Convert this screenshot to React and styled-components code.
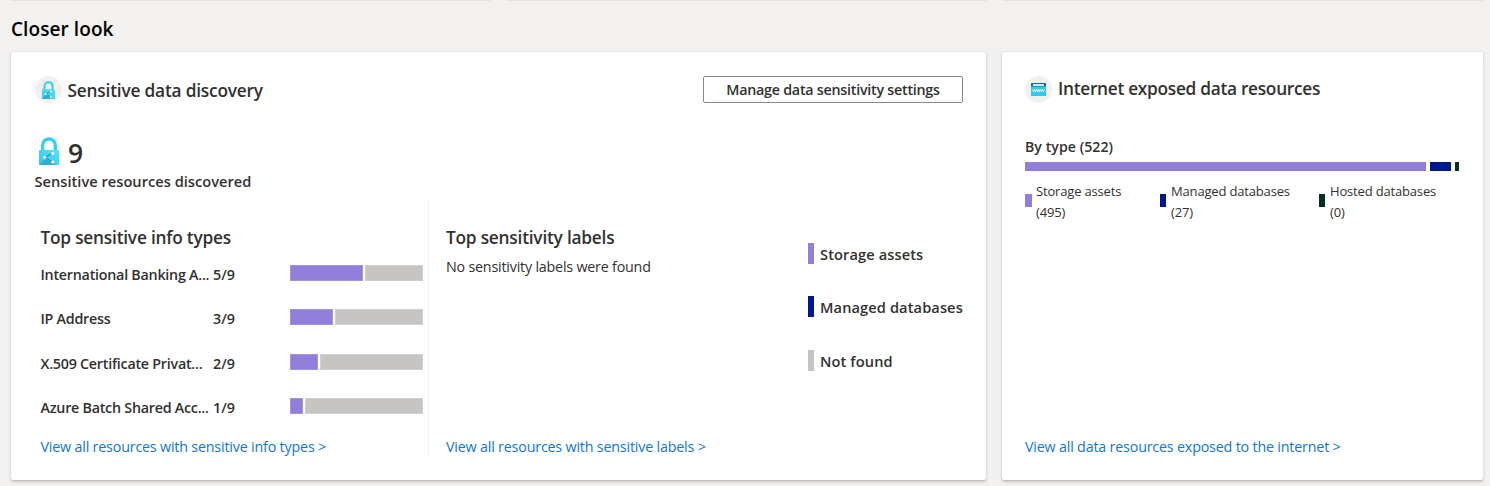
import React from "react";
import styled, { createGlobalStyle } from "styled-components";

const color = {
  purple: "#917edb",
  navy: "#00188f",
  green: "#022f22",
  gray: "#c6c5c3",
  ink: "#323130",
  link: "#0f78d0",
};

const GlobalStyle = createGlobalStyle`
  * { box-sizing: border-box; }
  body {
    margin: 0;
    background: #f2f1ef;
    color: ${color.ink};
    font-family: "Segoe UI", "Open Sans", "Noto Sans", sans-serif;
    overflow: hidden;
  }
`;

const Page = styled.main`
  width: 1490px;
  height: 486px;
  display: flex;
  flex-direction: column;
`;

const UpperEdges = styled.div`
  height: 1px;
  display: grid;
  grid-template-columns: 480px 480px 481px;
  column-gap: 16px;
  padding-left: 11px;
  & > span { background: #e5e4e2; }
`;

const Text = styled.span`
  font-size: ${(p) => p.$size || 14.3}px;
  font-weight: ${(p) => p.$weight || 600};
  letter-spacing: ${(p) => p.$track || 0}px;
  line-height: ${(p) => p.$line || 20}px;
  white-space: nowrap;
`;

const PageTitle = styled.h1`
  margin: 0;
  padding: 14px 0 0 11px;
  height: 51px;
  font-size: 19px;
  font-weight: 600;
  letter-spacing: 0.08px;
  line-height: 28px;
  color: #000;
`;

const Cards = styled.div`
  display: grid;
  grid-template-columns: 975px 481px;
  column-gap: 16px;
  padding-left: 11px;
  height: 428px;
`;

const Card = styled.section`
  background: #fff;
  border-radius: 2px;
  box-shadow: 0 1.6px 3.6px rgba(0, 0, 0, 0.15), 0 0.3px 1.2px rgba(0, 0, 0, 0.12);
  display: flex;
  flex-direction: column;
  padding-top: 24px;
`;

const Header = styled.header`
  display: flex;
  align-items: center;
  height: 27px;
  padding: 0 23px 0 ${(p) => (p.$tight ? 23 : 24)}px;
`;

const HeaderTitle = styled(Text)`
  height: 20px;
  line-height: ${(p) => (p.$tight ? 18 : 22)}px;
`;

const Badge = styled.span`
  width: 27px;
  height: 27px;
  border-radius: 50%;
  background: #f2f1ef;
  display: flex;
  align-items: center;
  justify-content: center;
  margin-right: ${(p) => p.$gap || 5.5}px;
`;

const Button = styled.button`
  margin: 0 0 0 auto;
  width: 260px;
  height: 27px;
  padding: 0;
  border: 1px solid #8a8886;
  border-radius: 2px;
  background: #fff;
  color: ${color.ink};
  font-family: inherit;
  line-height: 1;
`;

const Stat = styled.div`
  display: flex;
  align-items: center;
  height: 30px;
  margin-top: 33px;
  padding-left: 28px;
  gap: 9px;
`;

const StatValue = styled(Text)`
  padding-top: 3px;
`;

const StatCaption = styled.div`
  padding: 5px 0 0 23.5px;
  height: 32px;
  display: flex;
`;

const Lower = styled.div`
  display: grid;
  grid-template-columns: 418px 379px 1fr;
  grid-template-rows: 259px;
`;

const Column = styled.div`
  display: flex;
  flex-direction: column;
  padding: 28px 5px 0 ${(p) => p.$left}px;
  ${(p) => p.$divided && "border-right: 1px solid #f5f4f3;"}
`;

const Link = styled.a`
  margin-top: auto;
  height: 20px;
  color: ${color.link};
  display: flex;
`;

const InfoRows = styled.div`
  display: grid;
  grid-auto-rows: 44.33px;
  height: 172px;
  margin-top: 14px;
`;

const InfoRow = styled.div`
  display: grid;
  grid-template-columns: 172.5px 77px 133px;
  align-items: start;
`;

const InfoBar = styled.div`
  display: flex;
  gap: 2px;
  height: 16px;
  margin-top: 1px;
`;

const InfoSegment = styled.span`
  flex: ${(p) => (p.$width ? `0 0 ${p.$width}px` : "1")};
  background: ${(p) => p.$color};
  border: 1px solid rgba(255, 255, 255, 0.18);
`;

const Legend = styled.div`
  display: grid;
  grid-auto-rows: 53.4px;
  padding-top: 45px;
`;

const LegendItem = styled.div`
  display: flex;
  align-items: flex-start;
  gap: 6px;
`;

const LegendSwatch = styled.span`
  width: 6px;
  height: 21px;
  background: ${(p) => p.$color};
`;

const Exposure = styled.div`
  display: flex;
  flex-direction: column;
  padding: 34px 24px 23px 23px;
  flex: 1;
`;

const ExposureBar = styled.div`
  display: flex;
  gap: 4px;
  height: 9px;
  margin-top: 5px;
`;

const Segment = styled.span`
  width: ${(p) => p.$width}px;
  background: ${(p) => p.$color};
`;

const TypeLegend = styled.div`
  display: grid;
  grid-template-columns: 135px 159px 1fr;
  margin-top: 10px;
`;

const TypeItem = styled.div`
  display: flex;
  align-items: flex-start;
  height: 42px;
  gap: ${(p) => p.$gap}px;
`;

const TypeSwatch = styled.span`
  width: ${(p) => p.$width}px;
  height: 13px;
  margin-top: 13px;
  background: ${(p) => p.$color};
`;

const TypeText = styled.div`
  display: flex;
  flex-direction: column;
`;

function LockIcon({ width, height, id }) {
  return (
    <svg width={width} height={height} viewBox="0 0 20 28">
      <defs>
        <linearGradient id={id} x1="0" y1="1" x2="1" y2="0">
          <stop offset="0" stopColor="#3cc4e6" />
          <stop offset="0.5" stopColor="#42d4f4" />
          <stop offset="1" stopColor="#50e6ff" />
        </linearGradient>
      </defs>
      <path d="M3.7 14V8.6C3.700 4.500 6.300 2 10 2s6.300 2.500 6.300 6.600V14" fill="none" stroke="#32d0f5" strokeWidth="3.300" />
      <rect x="0" y="13" width="20" height="15" rx="0.600" fill={`url(#${id})`} />
      <path d="M0 28 6 22 13.800 25.500 17 28Z" fill="#198ab3" opacity="0.450" />
      <path d="M13.700 16.400 5.600 20.300 13.700 25" fill="none" stroke="#1d7fa5" strokeWidth="1" />
      <circle cx="5.600" cy="20.300" r="1.600" fill="#fff" />
      <circle cx="13.800" cy="16.400" r="1.600" fill="#fff" />
      <circle cx="13.800" cy="25" r="1.600" fill="#fff" />
    </svg>
  );
}

function WebIcon() {
  return (
    <svg width="15" height="13" viewBox="0 0 15 13">
      <rect width="15" height="13" rx="0.500" fill="#32c8f1" />
      <path d="M0 0.500Q0 0 .5 0h14q.5 0 .5.5V3.600H0Z" fill="#1267b4" />
      <rect x="2" y="1" width="11" height="2" fill="#d9e8f5" />
      <path
        d="M1.600 6.300l1 2.600 1-2.600 1 2.600 1-2.600M5.700 6.300l.9 2.600.9-2.600.9 2.600.9-2.600M9.400 6.300l1 2.600 1-2.600 1 2.600 1-2.600"
        fill="none"
        stroke="#e9fbff"
        strokeWidth="0.800"
      />
    </svg>
  );
}

const infoTypes = [
  { name: "International Banking A...", count: "5/9", width: 73 },
  { name: "IP Address", count: "3/9", width: 43 },
  { name: "X.509 Certificate Privat...", count: "2/9", width: 28 },
  { name: "Azure Batch Shared Acc...", count: "1/9", width: 13 },
];

const legend = [
  { name: "Storage assets", color: color.purple },
  { name: "Managed databases", color: color.navy },
  { name: "Not found", color: color.gray },
];

const types = [
  { name: "Storage assets", count: "(495)", color: color.purple, swatch: 7, gap: 4, width: 401 },
  { name: "Managed databases", count: "(27)", color: color.navy, swatch: 6, gap: 5, width: 21 },
  { name: "Hosted databases", count: "(0)", color: color.green, swatch: 6, gap: 5, width: 4 },
];

export default function App() {
  return (
    <Page>
      <GlobalStyle />
      <UpperEdges><span /><span /><span /></UpperEdges>
      <PageTitle>Closer look</PageTitle>
      <Cards>
        <Card>
          <Header>
            <Badge><LockIcon width={13} height={18} id="lockSmall" /></Badge>
            <HeaderTitle $size={17.3} $track={-0.2}>Sensitive data discovery</HeaderTitle>
            <Button><Text $track={-0.25}>Manage data sensitivity settings</Text></Button>
          </Header>
          <Stat>
            <LockIcon width={20} height={28} id="lockLarge" />
            <StatValue $size={26.5} $line={36}>9</StatValue>
          </Stat>
          <StatCaption><Text $size={14.6} $track={0.03}>Sensitive resources discovered</Text></StatCaption>
          <Lower>
            <Column $left={29.5} $divided>
              <Text $size={17.3} $line={24} $track={-0.22}>Top sensitive info types</Text>
              <InfoRows>
                {infoTypes.map((t) => (
                  <InfoRow key={t.name}>
                    <Text $track={-0.25} $line={22}>{t.name}</Text>
                    <Text $track={0} $line={22}>{t.count}</Text>
                    <InfoBar>
                      <InfoSegment $width={t.width} $color={color.purple} />
                      <InfoSegment $color={color.gray} />
                    </InfoBar>
                  </InfoRow>
                ))}
              </InfoRows>
              <Link><Text $weight={400} $track={-0.19}>View all resources with sensitive info types &gt;</Text></Link>
            </Column>
            <Column $left={17}>
              <Text $size={17.3} $line={24} $track={-0.22}>Top sensitivity labels</Text>
              <Text $weight={400} $track={-0.21} $line={33}>No sensitivity labels were found</Text>
              <Link><Text $weight={400} $track={-0.19}>View all resources with sensitive labels &gt;</Text></Link>
            </Column>
            <Legend>
              {legend.map((l) => (
                <LegendItem key={l.name}>
                  <LegendSwatch $color={l.color} />
                  <Text $line={22} $size={14.6} $track={0.11}>{l.name}</Text>
                </LegendItem>
              ))}
            </Legend>
          </Lower>
        </Card>
        <Card>
          <Header $tight>
            <Badge $gap={6}><WebIcon /></Badge>
            <HeaderTitle $tight $size={17.3} $track={-0.29}>Internet exposed data resources</HeaderTitle>
          </Header>
          <Exposure>
            <Text $size={14.1} $track={0.06}>By type (522)</Text>
            <ExposureBar>
              {types.map((t) => <Segment key={t.name} $width={t.width} $color={t.color} />)}
            </ExposureBar>
            <TypeLegend>
              {types.map((t) => (
                <TypeItem key={t.name} $gap={t.gap}>
                  <TypeSwatch $width={t.swatch} $color={t.color} />
                  <TypeText>
                    <Text $size={13} $weight={400} $line={21} $track={-0.17}>{t.name}</Text>
                    <Text $size={13} $weight={400} $line={21} $track={-0.17}>{t.count}</Text>
                  </TypeText>
                </TypeItem>
              ))}
            </TypeLegend>
            <Link><Text $weight={400} $track={-0.19}>View all data resources exposed to the internet &gt;</Text></Link>
          </Exposure>
        </Card>
      </Cards>
    </Page>
  );
}
